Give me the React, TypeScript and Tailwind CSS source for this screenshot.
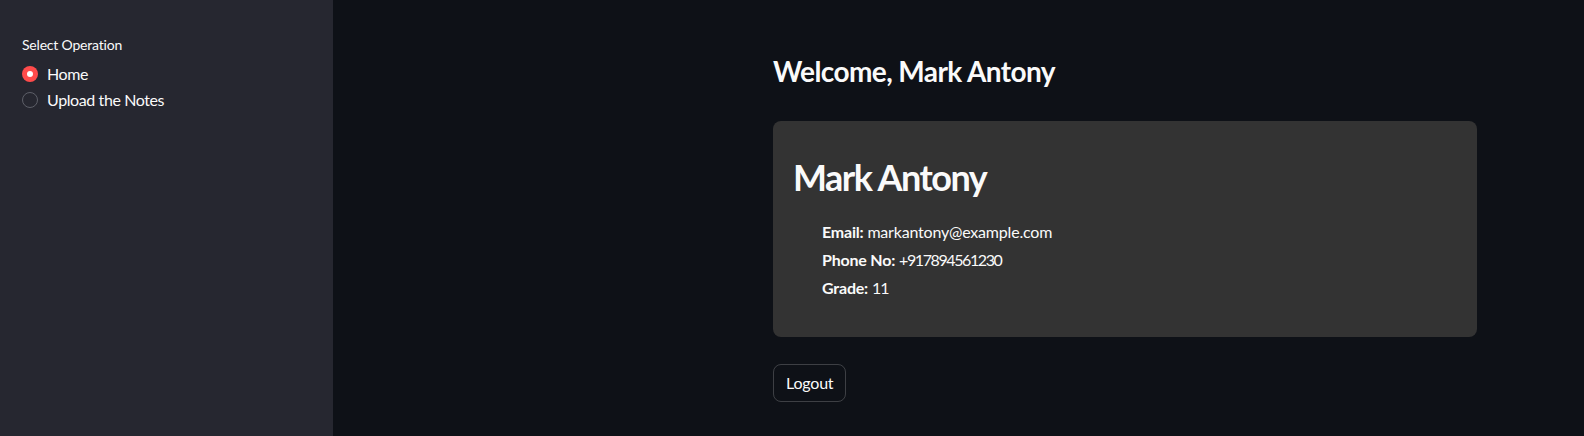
import React from "react";

function Radio({ checked, label }: { checked: boolean; label: string }) {
  return (
    <div className="flex items-center h-[26px]">
      {checked ? (
        <span className="w-4 h-4 rounded-full bg-[#ff4b4b] flex items-center justify-center">
          <span className="w-[6px] h-[6px] rounded-full bg-white" />
        </span>
      ) : (
        <span className="w-4 h-4 rounded-full border-[1.5px] border-[#5d5f68]" />
      )}
      <span className="ml-[9px] text-[16px] leading-[26px] tracking-[-0.4px] text-[#fafafa]">{label}</span>
    </div>
  );
}

export default function App() {
  return (
    <div
      className="flex w-[1584px] h-[436px] bg-[#0e1117] text-[#fafafa] overflow-hidden"
      style={{ fontFamily: "Lato, 'Liberation Sans', sans-serif" }}
    >
      <aside className="w-[333px] shrink-0 h-full bg-[#262730] pl-[22px] pt-[35px]">
        <div className="text-[14px] leading-[20px] tracking-[-0.2px] text-[#fafafa]">Select Operation</div>
        <div className="mt-[6px] flex flex-col">
          <Radio checked label="Home" />
          <Radio checked={false} label="Upload the Notes" />
        </div>
      </aside>
      <main className="flex-1 pl-[440px] pt-[54px]">
        <div className="w-[704px]">
          <h3 className="text-[28px] leading-[34px] font-bold tracking-[-0.6px]">Welcome, Mark Antony</h3>
          <div className="mt-[33px] bg-[#333333] rounded-[8px] pl-[20px] pt-[34px] pb-[35px]">
            <h2 className="text-[36px] leading-[44px] font-bold tracking-[-1.5px]">Mark Antony</h2>
            <ul className="mt-[19px] pl-[29px] text-[16px] leading-[28px] tracking-[-0.2px]">
              <li>
                <b className="font-bold">Email:</b> markantony@example.com
              </li>
              <li>
                <b className="font-bold">Phone No:</b> <span className="tracking-[-1.4px]">+917894561230</span>
              </li>
              <li>
                <b className="font-bold">Grade:</b> <span className="tracking-[-0.9px]">11</span>
              </li>
            </ul>
          </div>
          <button className="mt-[27px] h-[38px] px-[12px] rounded-[8px] border border-[#fafafa33] bg-transparent text-[16px] leading-[24px] tracking-[-0.2px] text-[#fafafa] flex items-center">
            Logout
          </button>
        </div>
      </main>
    </div>
  );
}
